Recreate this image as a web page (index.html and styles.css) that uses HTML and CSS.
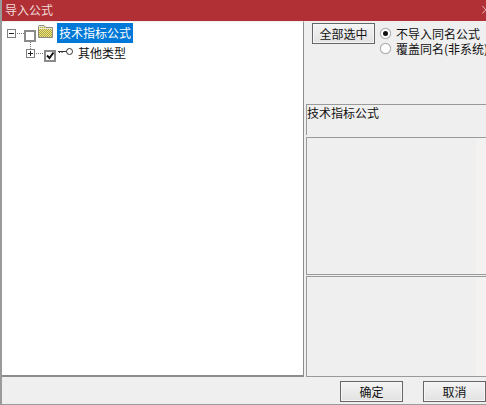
FILE: index.html
```html
<!DOCTYPE html>
<html lang="zh">
<head>
<meta charset="utf-8">
<title>导入公式</title>
<link rel="stylesheet" href="styles.css">
</head>
<body>
<div class="window">
  <div class="titlebar">
    <span class="title">导入公式</span>
    <svg class="close" width="8" height="12" viewBox="0 0 8 12"><path d="M0.500 2 L7 9.500 M7 2 L0.500 9.500" stroke="#e3bcbd" fill="none"/></svg>
  </div>
  <div class="content">
    <div class="tree">
      <div class="row row-root">
        <svg class="glyphs" width="54" height="20" viewBox="0 0 54 20">
          <defs>
            <pattern id="dither" width="2" height="2" patternUnits="userSpaceOnUse">
              <rect width="2" height="2" fill="#f2e76a"/>
              <rect width="1" height="1" fill="#a8a25a"/>
              <rect x="1" y="1" width="1" height="1" fill="#a8a25a"/>
            </pattern>
          </defs>
          <rect x="5.500" y="6.500" width="8" height="8" fill="#fff" stroke="#7f7f7f"/>
          <path d="M7 10.500 H12" stroke="#222"/>
          <path d="M15 10.500 H22" stroke="#777" stroke-dasharray="1 1"/>
          <rect x="23" y="8" width="10" height="10" fill="#fff" stroke="#8a8a8a" stroke-width="2"/>
          <path d="M28.500 19 V27" stroke="#777" stroke-dasharray="1 1"/>
          <path d="M36.500 14.500 V4 Q36.500 2.500 38 2.500 H42 L44 4.500 H50.500 V14.500 Z" fill="url(#dither)" stroke="#8a8a80"/>
          <path d="M37 3.500 H42 M37 5.500 H50" stroke="#e8e8e0"/>
        </svg>
        <span class="label label-selected">技术指标公式</span>
      </div>
      <div class="row row-child">
        <svg class="glyphs" width="72" height="20" viewBox="0 0 72 20">
          <rect x="24.500" y="6.500" width="8" height="8" fill="#fff" stroke="#7f7f7f"/>
          <path d="M26 10.500 H31 M28.500 8 V13" stroke="#222"/>
          <path d="M34 10.500 H41" stroke="#777" stroke-dasharray="1 1"/>
          <rect x="43" y="8" width="10" height="10" fill="#fff" stroke="#8a8a8a" stroke-width="2"/>
          <path d="M45 12.500 L47.500 15 L51.500 9.500" fill="none" stroke="#111" stroke-width="2"/>
          <circle cx="67.500" cy="8.500" r="3" fill="#fff" stroke="#333"/>
          <path d="M56 8.500 H64.500 M57.500 8.500 V10 M60 8.500 V10" fill="none" stroke="#333"/>
        </svg>
        <span class="label">其他类型</span>
      </div>
    </div>
    <div class="side">
      <div class="options">
        <button class="btn btn-all" type="button">全部选中</button>
        <div class="radios">
          <div class="radio-row"><span class="radio radio-on"></span><span>不导入同名公式</span></div>
          <div class="radio-row"><span class="radio"></span><span class="nowrap">覆盖同名(非系统)</span></div>
        </div>
      </div>
      <div class="panel panel-name">技术指标公式</div>
      <div class="panel panel-mid"></div>
      <div class="panel panel-low"></div>
    </div>
  </div>
  <div class="footer">
    <button class="btn btn-ok" type="button">确定</button>
    <button class="btn btn-cancel" type="button">取消</button>
  </div>
</div>
</body>
</html>
```
FILE: styles.css
```css
* { box-sizing: border-box; }
html, body { margin: 0; padding: 0; }
body {
  width: 486px;
  height: 405px;
  overflow: hidden;
  font-family: "Noto Sans CJK SC", "Liberation Sans", sans-serif;
  font-size: 12px;
  line-height: 16px;
  color: #111;
  background: #efefef;
}
.window {
  width: 486px;
  height: 405px;
  display: flex;
  flex-direction: column;
  border-left: 2px solid #9a9a9a;
  border-bottom: 1px solid #9a9a9a;
  overflow: hidden;
}
.titlebar {
  height: 21px;
  margin-left: -2px;
  padding: 0 0 2px 5px;
  flex: none;
  display: flex;
  align-items: center;
  justify-content: space-between;
  background: #b03035;
  color: #f0dcdc;
}
.title { font-size: 12px; }
.close { flex: none; margin-right: -4px; }
.content {
  height: 356px;
  flex: none;
  display: flex;
}
.tree {
  width: 302px;
  flex: none;
  padding-top: 1px;
  background: #fff;
  border-right: 1px solid #8c8c8c;
  border-bottom: 2px solid #8c8c8c;
  border-top: 1px solid #efefef;
}
.row { display: flex; align-items: center; height: 20px; }
.glyphs { flex: none; display: block; overflow: visible; }
.label { padding: 0 2px; white-space: nowrap; }
.row-root .label { margin-left: 1px; }
.row-child .label { margin-left: 2px; }
.label-selected {
  height: 20px;
  line-height: 20px;
  background: #0078d7;
  color: #fff;
}
.side {
  flex: 1;
  min-width: 0;
  display: flex;
  flex-direction: column;
  padding-left: 2px;
}
.options {
  height: 83px;
  flex: none;
  display: flex;
  align-items: flex-start;
  padding: 2px 0 0 6px;
}
.btn {
  font: inherit;
  color: #111;
  padding: 0;
  border: 1px solid #666;
  box-shadow: inset 0 0 0 1px #f6f6f6;
  background: linear-gradient(#f4f4f4, #e2e2e2);
  height: 21px;
  display: block;
}
.btn-all { width: 63px; flex: none; }
.radios {
  margin-left: 5px;
  padding-top: 3px;
  display: flex;
  flex-direction: column;
  white-space: nowrap;
}
.radio-row {
  display: flex;
  align-items: center;
  height: 15px;
  line-height: 15px;
  gap: 5px;
}
.radio {
  width: 11px;
  height: 11px;
  flex: none;
  border-radius: 50%;
  border: 1px solid #a8a8a8;
  background: #fff;
  box-shadow: 0 0 1px #bbb;
  display: flex;
  align-items: center;
  justify-content: center;
}
.radio-on::after {
  content: "";
  width: 5px;
  height: 5px;
  border-radius: 50%;
  background: #111;
}
.nowrap { white-space: nowrap; }
.panel {
  flex: none;
  border: 1px solid #9a9a9a;
  border-right: 0;
  background: #efefef;
}
.panel-name {
  height: 31px;
  border-bottom: 0;
  line-height: 16px;
}
.panel-mid {
  height: 138px;
  margin-top: 2px;
  background: linear-gradient(to right, #efefef 169px, #f3f2f0 169px);
}
.panel-low {
  height: 101px;
  margin-top: 1px;
  background: linear-gradient(to right, #efefef 169px, #f3f2f0 169px);
}
.footer {
  flex: 1;
  display: flex;
  align-items: flex-start;
  padding: 4px 0 0 338px;
  gap: 20px;
}
.btn-ok { width: 63px; }
.btn-cancel { width: 63px; }
```
